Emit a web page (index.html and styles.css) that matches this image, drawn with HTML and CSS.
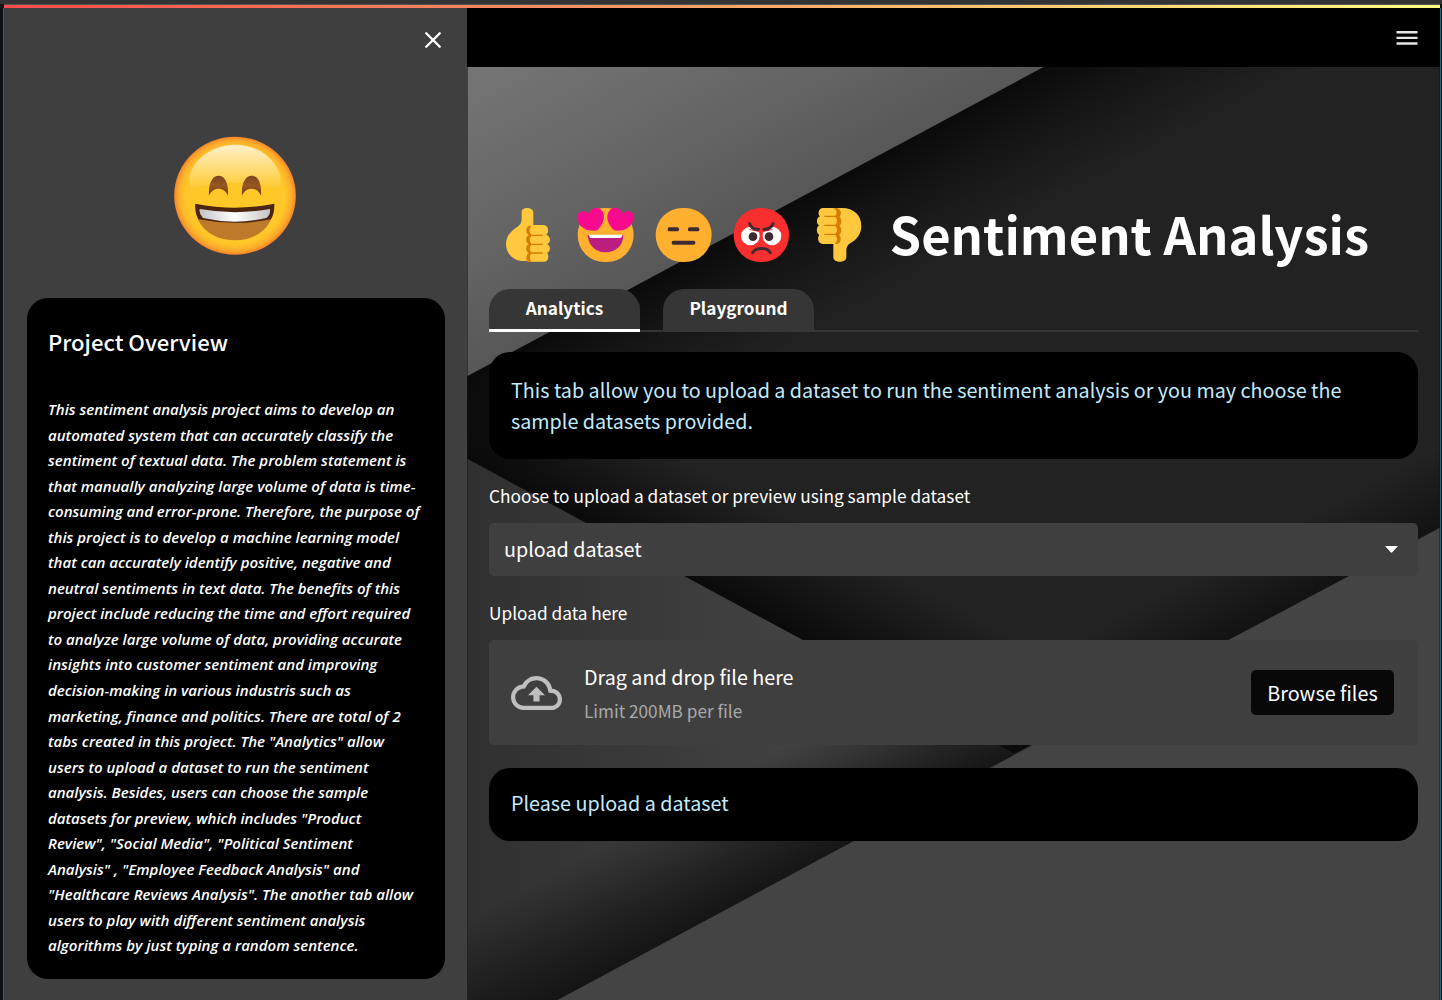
FILE: index.html
```html
<!DOCTYPE html>
<html lang="en">
<head>
<meta charset="utf-8">
<title>Sentiment Analysis</title>
<link rel="stylesheet" href="styles.css">
</head>
<body>
<div class="window">
  <div class="decoration"></div>
  <div class="app">
    <aside class="sidebar">
      <div class="sidebar-top">
        <svg class="close" width="18" height="18" viewBox="0 0 18 18" fill="none" stroke="#fff" stroke-width="2.3" stroke-linecap="round"><path d="M2.2 2.2l13.6 13.6M15.8 2.2L2.2 15.8"/></svg>
      </div>
      <svg class="smile" width="150" height="140" viewBox="0 0 450 420">
        <defs>
          <radialGradient id="face"><stop offset="0" stop-color="#ffc928"/><stop offset=".82" stop-color="#ffc729"/><stop offset=".93" stop-color="#fcac29"/><stop offset="1" stop-color="#f5852c"/></radialGradient>
          <linearGradient id="gloss" x1="0" y1="0" x2="0" y2="1"><stop offset="0" stop-color="#fff" stop-opacity=".76"/><stop offset="1" stop-color="#fff" stop-opacity=".06"/></linearGradient>
          <linearGradient id="teeth"><stop offset="0" stop-color="#c4c4c6"/><stop offset=".5" stop-color="#fff"/><stop offset="1" stop-color="#c4c4c6"/></linearGradient>
          <linearGradient id="eye" x1="0" y1="0" x2="0" y2="1"><stop offset="0" stop-color="#7d4420"/><stop offset=".5" stop-color="#985723"/><stop offset="1" stop-color="#6f3a18"/></linearGradient>
        </defs>
        <ellipse cx="225" cy="212" rx="182.500" ry="177" fill="url(#face)"/>
        <path d="M225 59C298 59 362 110 362 170C362 192 340 190 314 182C260 170 190 170 136 182C110 190 88 192 88 170C88 110 152 59 225 59Z" fill="url(#gloss)"/>
        <path d="M147 212C144 172 159 152 176 152C193 152 207 172 204 212C193 184 158 184 147 212ZM246 212C243 172 258 152 275 152C292 152 306 172 303 212C292 184 257 184 246 212Z" fill="url(#eye)"/>
        <path d="M106 238Q225 262 342 238C344 300 295 346 224 346C153 346 103 300 106 238Z" fill="#bd7a2a"/>
        <path d="M106 236Q225 260 343 236Q344 264 333 283Q225 304 115 283Q103 260 106 236Z" fill="#4c2510"/>
        <path d="M119 252Q225 271 330 252Q332 269 319 279Q225 301 129 279Q116 266 119 252Z" fill="url(#teeth)"/>
      </svg>
      <section class="overview">
        <h2>Project Overview</h2>
        <p>This sentiment analysis project aims to develop an<br>automated system that can accurately classify the<br>sentiment of textual data. The problem statement is<br>that manually analyzing large volume of data is time-<br>consuming and error-prone. Therefore, the purpose of<br>this project is to develop a machine learning model<br>that can accurately identify positive, negative and<br>neutral sentiments in text data. The benefits of this<br>project include reducing the time and effort required<br>to analyze large volume of data, providing accurate<br>insights into customer sentiment and improving<br>decision-making in various industris such as<br>marketing, finance and politics. There are total of 2<br>tabs created in this project. The "Analytics" allow<br>users to upload a dataset to run the sentiment<br>analysis. Besides, users can choose the sample<br>datasets for preview, which includes "Product<br>Review", "Social Media", "Political Sentiment<br>Analysis" , "Employee Feedback Analysis" and<br>"Healthcare Reviews Analysis". The another tab allow<br>users to play with different sentiment analysis<br>algorithms by just typing a random sentence.</p>
      </section>
    </aside>
    <div class="main">
      <header class="topbar">
        <svg width="22" height="16" viewBox="0 0 22 16" fill="#e4e4e4"><path d="M.5 1h21v2.400H.5zM.5 6.700h21v2.400H.5zM.5 12.300h21v2.400H.5z"/></svg>
      </header>
      <div class="stage">
        <svg class="backdrop" width="972" height="933" viewBox="467 67 972 933">
          <defs>
            <linearGradient id="light" gradientUnits="userSpaceOnUse" x1="480" y1="67" x2="650" y2="390"><stop offset="0" stop-color="#757575"/><stop offset=".5" stop-color="#626262"/><stop offset="1" stop-color="#4a4a4a"/></linearGradient>
            <linearGradient id="fold" gradientUnits="userSpaceOnUse" x1="755" y1="221" x2="815" y2="333"><stop offset="0" stop-color="#0a0a0a"/><stop offset=".4" stop-color="#151515"/><stop offset="1" stop-color="#222"/></linearGradient>
            <linearGradient id="vee" gradientUnits="userSpaceOnUse" x1="690" y1="577" x2="738" y2="488"><stop offset="0" stop-color="#080808" stop-opacity=".9"/><stop offset="1" stop-color="#080808" stop-opacity="0"/></linearGradient>
            <linearGradient id="veeRight" gradientUnits="userSpaceOnUse" x1="1228" y1="640" x2="1194" y2="576"><stop offset="0" stop-color="#080808" stop-opacity=".6"/><stop offset="1" stop-color="#080808" stop-opacity="0"/></linearGradient>
            <linearGradient id="left" gradientUnits="userSpaceOnUse" x1="467" y1="700" x2="900" y2="700"><stop offset="0" stop-color="#303030"/><stop offset="1" stop-color="#484848"/></linearGradient>
            <linearGradient id="crease" gradientUnits="userSpaceOnUse" x1="705" y1="920" x2="650" y2="820"><stop offset="0" stop-color="#0e0e0e" stop-opacity=".85"/><stop offset=".35" stop-color="#0e0e0e" stop-opacity=".6"/><stop offset="1" stop-color="#0e0e0e" stop-opacity="0"/></linearGradient>
          </defs>
          <path d="M467 67h972v933H467z" fill="url(#fold)"/>
          <path d="M467 459L1013 754L1439 528V67L467 376z" fill="url(#vee)"/>
          <path d="M1013 754L1439 528V67H900z" fill="url(#veeRight)"/>
          <path d="M467 67H1043L467 376z" fill="url(#light)"/>
          <path d="M467 459L1013 754V1000H467z" fill="url(#left)"/>
          <path d="M467 459L1013 754V1000H467z" fill="url(#crease)"/>
          <path d="M1439 528L1228 640L557 1000H1439z" fill="#444"/>
        </svg>
        <main class="content">
          <div class="title">
            <svg width="389" height="60" viewBox="-3 45 1167 180">
              <g fill="#ffc83d">
                <path d="M95 66C95 50 130 50 130 68V125H165V213H105C72 215 48 192 48 162C48 137 66 120 83 110Q95 102 95 88Z"/>
                <path d="M120 105H160C178 105 177 132 168 134C184 138 183 160 171 162C183 166 182 187 171 189C178 194 176 214 164 215H112Z"/>
              </g>
              <path d="M118 107C104 112 108 132 116 135C106 142 106 156 116 162C106 169 106 183 116 189C108 195 106 211 114 215H124C118 206 118 196 124 191H158V187H124C118 180 118 171 124 165H158V161H124C118 154 118 145 124 138H158V134H124C117 126 117 116 124 107Z" fill="#d67d00"/>
              <rect x="263" y="54" width="168" height="162" rx="80" fill="#ffb02e"/>
              <path d="M296 121C280 116 260 104 263 80C264 62 283 58 295 71C302 55 322 47 334 60C350 77 339 104 323 120Q318 124 296 121ZM396 121C412 116 432 104 431 80C430 62 411 58 399 71C392 55 372 47 360 60C344 77 354 104 370 119Q376 124 396 121Z" fill="#f70a8d"/>
              <path d="M293 136H400C399 167 378 187 347 187C315 187 296 166 293 136Z" fill="#bb1d80"/>
              <path d="M297 134H397Q395 144 389 144H304Q299 144 297 134Z" fill="#fff"/>
              <rect x="497" y="54" width="168" height="162" rx="80" fill="#ffb02e"/>
              <g fill="#402a32"><rect x="533" y="112" width="34" height="12" rx="5"/><rect x="594" y="112" width="34" height="12" rx="5"/><rect x="545" y="152" width="71" height="12" rx="5"/></g>
              <rect x="731" y="54" width="166" height="162" rx="80" fill="#f92f2f"/>
              <circle cx="781" cy="138" r="28" fill="#fff"/><circle cx="846" cy="138" r="28" fill="#fff"/>
              <path d="M765 107Q784 127 812 114L806 126 780 120ZM862 107Q843 127 814 114L820 126 846 120Z" fill="#f92f2f"/>
              <circle cx="789" cy="140" r="13" fill="#402a32"/><circle cx="837" cy="140" r="13" fill="#402a32"/>
              <path d="M779 101Q785 119 805 118M849 101Q842 119 822 118M788 188C796 171 832 171 841 188" fill="none" stroke="#402a32" stroke-width="9" stroke-linecap="round"/>
              <g fill="#ffc83d">
                <path d="M1030 54H1055C1092 54 1114 76 1114 108C1114 134 1097 151 1082 159Q1069 166 1069 181V202C1069 220 1030 220 1030 202Z"/>
                <path d="M1048 54H997C984 56 983 75 990 79C977 84 979 103 988 106C978 111 978 130 988 135C981 142 984 161 998 162H1048Z"/>
              </g>
              <path d="M1043 54C1055 60 1055 75 1048 80C1056 87 1056 101 1048 107C1056 113 1056 128 1048 134C1055 142 1054 160 1040 162H1034C1043 154 1043 144 1036 135H1003V131H1036C1043 124 1043 115 1036 108H1003V104H1036C1043 97 1043 88 1036 81H1003V77H1036C1043 69 1040 60 1030 54Z" fill="#d67d00"/>
            </svg>
            <h1>Sentiment Analysis</h1>
          </div>
          <nav class="tabs"><a class="tab active">Analytics</a><a class="tab">Playground</a></nav>
          <div class="alert">This tab allow you to upload a dataset to run the sentiment analysis or you may choose the<br>sample datasets provided.</div>
          <label class="label first">Choose to upload a dataset or preview using sample dataset</label>
          <div class="select"><span>upload dataset</span><svg width="13" height="7" viewBox="0 0 13 7"><path d="M0 0h13L7.300 6.300q-.8.700-1.600 0z" fill="#fff"/></svg></div>
          <label class="label second">Upload data here</label>
          <div class="uploader">
            <svg class="cloud" width="51" height="34" viewBox="0 4 24 16" fill="#bfbfbf"><path d="M19.350 10.040A7.490 7.490 0 0 0 12 4C9.110 4 6.600 5.640 5.350 8.040A5.994 5.994 0 0 0 0 14c0 3.310 2.690 6 6 6h13c2.760 0 5-2.240 5-5 0-2.640-2.050-4.780-4.650-4.960zM19 18H6c-2.210 0-4-1.790-4-4 0-2.050 1.530-3.760 3.560-3.970l1.070-.110.5-.950A5.469 5.469 0 0 1 12 6c2.620 0 4.880 1.860 5.390 4.430l.3 1.500 1.530.110A2.980 2.980 0 0 1 22 15c0 1.650-1.350 3-3 3zM8 13h2.550v3h2.900v-3H16l-4-4z"/></svg>
            <div class="instructions"><span class="drag">Drag and drop file here</span><span class="limit">Limit 200MB per file</span></div>
            <button class="browse">Browse files</button>
          </div>
          <div class="alert notice">Please upload a dataset</div>
        </main>
      </div>
    </div>
  </div>
</div>
</body>
</html>
```
FILE: styles.css
```css
* { box-sizing: border-box; }
body {
  margin: 0;
  color: #fff;
  font: 400 19.74px/31.5px "Noto Sans CJK SC", "Open Sans", sans-serif;
}
svg { display: block; flex: none; }
.window {
  height: 1000px;
  overflow: hidden;
  display: flex;
  flex-direction: column;
  background: linear-gradient(#333 0 4px, #0c1216 4px);
  padding: 4px 1px 0 3px;
}
.decoration {
  height: 4px;
  flex: none;
  margin: 0 1px;
  background: linear-gradient(90deg, #ff4b4b, #fffd80);
  border-top: 1px solid #555;
}
.app {
  flex: 1;
  min-height: 0;
  display: flex;
  border-left: 1px solid #2b6577;
  border-right: 1px solid #2b6577;
}
.sidebar {
  width: 463px;
  flex: none;
  background: #3f3f3f;
  padding: 0 22.5px;
  display: flex;
  flex-direction: column;
}
.sidebar-top {
  height: 117px;
  padding: 23px 2.5px 0;
  display: flex;
  justify-content: flex-end;
}
.smile { margin-left: 133.5px; }
.overview {
  margin-top: 33px;
  height: 681px;
  border-radius: 21px;
  background: #000;
  padding: 27px 0 0 21.5px;
}
.overview h2 {
  margin: 0;
  font-size: 22.06px;
  font-weight: 500;
  line-height: 32px;
}
.overview p {
  margin: 40px 0 0;
  white-space: nowrap;
  font: italic 600 15.05px/25.54px "Open Sans", sans-serif;
}
.main {
  flex: 1;
  min-width: 0;
  display: flex;
  flex-direction: column;
}
.topbar {
  height: 59px;
  flex: none;
  background: #000;
  padding: 0 22px;
  display: flex;
  align-items: center;
  justify-content: flex-end;
}
.stage { flex: 1; display: grid; }
.backdrop, .content { grid-area: 1 / 1; }
.backdrop { width: 100%; }
.content {
  position: relative;
  padding: 138px 22px 0;
  display: flex;
  flex-direction: column;
}
.title { display: flex; align-items: flex-start; height: 84px; }
.title h1 {
  margin: -2px 0 0 11.5px;
  font-size: 50.7px;
  font-weight: 700;
  line-height: 60px;
  white-space: nowrap;
}
.tabs {
  height: 43px;
  display: flex;
  gap: 23px;
  background: linear-gradient(#353535, #353535) bottom / 100% 2px no-repeat;
}
.tab {
  width: 151px;
  text-align: center;
  border-radius: 21px 21px 0 0;
  background: #363636;
  font-size: 17.2px;
  font-weight: 700;
  line-height: 37px;
}
.active { box-shadow: inset 0 -3px #fff; }
.alert {
  margin-top: 20px;
  height: 107px;
  border-radius: 21px;
  background: #000;
  color: #c3ebff;
  padding: 21.5px 22px;
  white-space: nowrap;
}
.label { font-size: 17.26px; line-height: 24px; height: 24px; }
.first { margin: 25px 0 15px; }
.second { margin: 25px 0 15px; }
.select {
  height: 53px;
  border-radius: 5px;
  background: #3f3f3f;
  padding: 0 20px 0 15px;
  display: flex;
  align-items: center;
  justify-content: space-between;
}
.select span { margin-top: -2px; }
.uploader {
  height: 105px;
  border-radius: 5px;
  background: #3f3f3f;
  padding: 0 24px 0 22px;
  display: flex;
  align-items: center;
}
.instructions {
  margin: 5px 0 0 22px;
  flex: 1;
  display: flex;
  flex-direction: column;
}
.limit { color: #a9a9a9; font-size: 17.2px; line-height: 36px; }
.browse {
  width: 143px;
  height: 45px;
  border: 0;
  border-radius: 5px;
  background: #080808;
  color: #fff;
  font: inherit;
  padding: 0;
}
.notice { height: 73px; margin-top: 22.5px; padding-top: 19.5px; }
```
